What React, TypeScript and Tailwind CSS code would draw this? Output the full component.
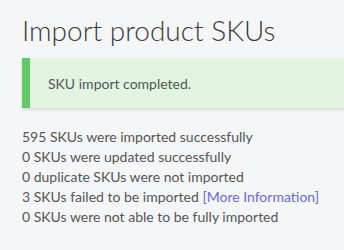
export default function App() {
  const lines = [
    '595 SKUs were imported successfully',
    '0 SKUs were updated successfully',
    '0 duplicate SKUs were not imported',
  ];
  return (
    <main
      className="h-[250px] w-[344px] overflow-hidden bg-[#f5f6f8] pl-[22px] pt-[12px] text-[#555]"
      style={{ fontFamily: 'Lato, "Liberation Sans", sans-serif' }}
    >
      <h1 className="text-[28px] font-light leading-[37px] text-[#3a3a3a] whitespace-nowrap">Import product SKUs</h1>

      {/* Alert */}
      <div className="mt-[9px] -mr-[40px] flex h-[50px] items-center border-l-[8px] border-[#62c96a] bg-[#e1f5e1] pl-[18px] shadow-[0_2px_3px_rgba(0,0,0,0.12)]">
        <p className="text-[14px] text-[#555]">SKU import completed.</p>
      </div>

      <div className="mt-[19px] text-[14px] leading-[20px] whitespace-nowrap">
        {lines.map(l => (
          <p key={l}>{l}</p>
        ))}
        <p>
          3 SKUs failed to be imported <span className="text-[#6b6bdb]">[More Information]</span>
        </p>
        <p>0 SKUs were not able to be fully imported</p>
      </div>
    </main>
  );
}
